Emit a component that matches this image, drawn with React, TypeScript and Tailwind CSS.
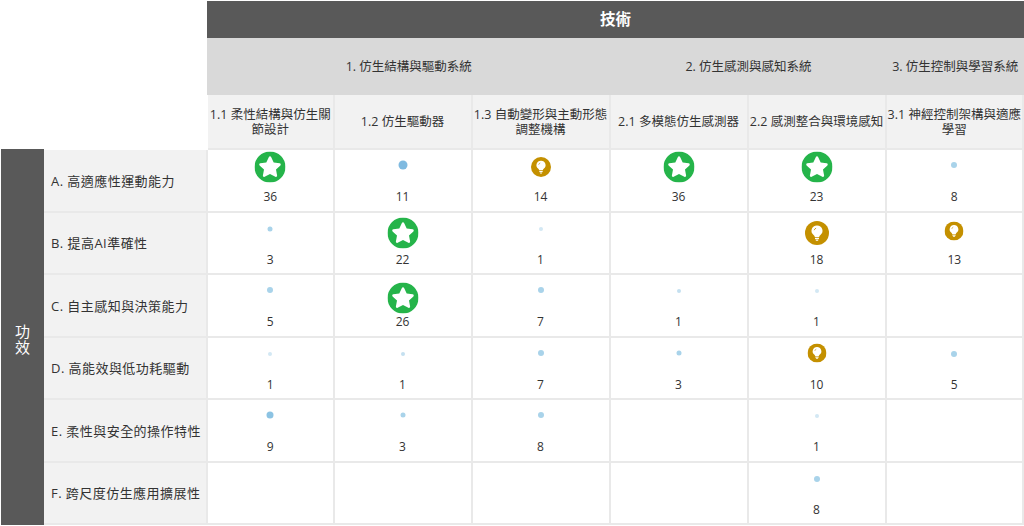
import React from "react";

type Mark = { k: "s" | "b" | "d"; size: number; cy: number; color?: string; n?: number } | null;

const font = { fontFamily: '"Open Sans","Noto Sans CJK TC",sans-serif' };

const colClass = ["col-start-4", "col-start-5", "col-start-6", "col-start-7", "col-start-8", "col-start-9"];
const rowClass = ["row-start-5", "row-start-6", "row-start-7", "row-start-8", "row-start-9", "row-start-10"];

function Star({ size }: { size: number }) {
  return (
    <svg width={size} height={size} viewBox="0 0 31 31" className="block">
      <circle cx="15.5" cy="15.5" r="15.5" fill="#25b44a" />
      <path
        d="M15.5 4.8c.5 0 .9.3 1.1.7l2.6 5.5 6 .8c1 .1 1.4 1.4.7 2.1l-4.4 4.2 1.1 6c.2 1-.9 1.7-1.7 1.2l-5.4-2.9-5.4 2.9c-.8.5-1.9-.2-1.7-1.2l1.1-6-4.4-4.2c-.7-.7-.3-2 .7-2.1l6-.8 2.6-5.5c.2-.4.6-.7 1.1-.7z"
        fill="#fff"
      />
    </svg>
  );
}

function Bulb({ size }: { size: number }) {
  return (
    <svg width={size} height={size} viewBox="0 0 24 24" className="block">
      <circle cx="12" cy="12" r="12" fill="#c49000" />
      <path d="M12 4.4a5.4 5.4 0 0 0-3.2 9.8c.6.5.9 1.1 1 1.8h4.4c.1-.7.4-1.3 1-1.8A5.4 5.4 0 0 0 12 4.4z" fill="#fff" />
      <path d="M10 16.8h4v1.1h-4zM10.4 18.5h3.2l-.6 1.2h-2z" fill="#fff" />
      <path d="M9.2 9.2a3.2 3.2 0 0 1 1.9-2.1" stroke="#c49000" strokeWidth=".8" fill="none" />
    </svg>
  );
}

const cols: React.ReactNode[] = [
  <>1.1 柔性結構與仿生關<br />節設計</>,
  "1.2 仿生驅動器",
  <>1.3 自動變形與主動形態<br />調整機構</>,
  "2.1 多模態仿生感測器",
  "2.2 感測整合與環境感知",
  <>3.1 神經控制架構與適應<br />學習</>,
];

const dot = (size: number, cy: number, n: number, color = "#a9d3ea"): Mark => ({ k: "d", size, cy, n, color });
const star = (cy: number, n: number): Mark => ({ k: "s", size: 31, cy, n });
const bulb = (size: number, cy: number, n: number): Mark => ({ k: "b", size, cy, n });

const rows: { label: string; cells: Mark[] }[] = [
  {
    label: "A. 高適應性運動能力",
    cells: [star(17, 36), dot(9, 15, 11, "#7fbae0"), bulb(20, 17, 14), star(17, 36), star(17, 23), dot(6, 15, 8)],
  },
  {
    label: "B. 提高AI準確性",
    cells: [dot(5, 16, 3), star(20, 22), dot(4, 16, 1, "#d3e8f4"), null, bulb(24, 20, 18), bulb(19, 18, 13)],
  },
  {
    label: "C. 自主感知與決策能力",
    cells: [dot(6, 15, 5), star(23, 26), dot(6, 15, 7), dot(4, 16, 1, "#c4e0f0"), dot(4, 16, 1, "#d3e8f4"), null],
  },
  {
    label: "D. 高能效與低功耗驅動",
    cells: [dot(4, 16, 1, "#d3e8f4"), dot(4, 16, 1, "#c4e0f0"), dot(6, 15, 7), dot(5, 15, 3), bulb(19, 15, 10), dot(6, 16, 5)],
  },
  {
    label: "E. 柔性與安全的操作特性",
    cells: [dot(7, 15, 9, "#8cc3e3"), dot(5, 15, 3), dot(6, 15, 8), null, dot(4, 16, 1, "#d3e8f4"), null],
  },
  {
    label: "F. 跨尺度仿生應用擴展性",
    cells: [null, null, null, null, dot(6, 16, 8), null],
  },
];

function Cell({ mark, className }: { mark: Mark; className: string }) {
  return (
    <div className={"relative flex flex-col items-center border-r-2 border-b-2 border-[#e9e9e9] bg-white " + className}>
      {mark && (
        <>
          <div className="absolute left-1/2 -translate-x-1/2 -translate-y-1/2" style={{ top: mark.cy }}>
            {mark.k === "s" && <Star size={mark.size} />}
            {mark.k === "b" && <Bulb size={mark.size} />}
            {mark.k === "d" && (
              <div className="rounded-full" style={{ width: mark.size, height: mark.size, background: mark.color }} />
            )}
          </div>
          <div className="mt-[39px] text-[12px] leading-[16px] text-[#333]">{mark.n}</div>
        </>
      )}
    </div>
  );
}

export default function App() {
  return (
    <div
      style={font}
      className="grid h-[526px] w-[1024px] grid-cols-[1px_43px_164px_126.5px_138px_138px_138px_138px_137.5px_1px] grid-rows-[1px_37px_57px_55px_62.5px_62.5px_62.5px_62.5px_62.5px_62.5px_2px] bg-white text-[#333]"
    >
      <div className="col-span-6 col-start-4 row-start-2 -ml-px flex items-center justify-center bg-[#595959] text-[15.5px] font-bold text-white">
        技術
      </div>
      <div className="col-span-3 col-start-4 row-start-3 -ml-px flex items-center justify-center bg-[#d9d9d9] pt-px text-[12.5px]">
        1. 仿生結構與驅動系統
      </div>
      <div className="col-span-2 col-start-7 row-start-3 flex items-center justify-center bg-[#d9d9d9] pt-px text-[12.5px]">
        2. 仿生感測與感知系統
      </div>
      <div className="col-start-9 row-start-3 flex items-center justify-center bg-[#d9d9d9] pt-px text-[12.5px]">
        3. 仿生控制與學習系統
      </div>
      {cols.map((c, i) => (
        <div
          key={i}
          className={
            colClass[i] +
            " row-start-4 flex items-center justify-center whitespace-nowrap border-r-2 border-b-2 border-[#e9e9e9] bg-[#f2f2f2] pt-px text-center text-[12.5px] leading-[15.5px]"
          }
        >
          <span>{c}</span>
        </div>
      ))}
      <div className="col-start-2 row-span-6 row-start-5 -mt-px flex items-center justify-center bg-[#595959] pt-[3px] text-center text-[15px] font-normal leading-[16px] text-white">
        <span>功<br />效</span>
      </div>
      {rows.map((r, i) => (
        <React.Fragment key={r.label}>
          <div
            className={
              rowClass[i] +
              " col-start-3 flex items-center whitespace-nowrap border-r-2 border-b-2 border-[#e9e9e9] bg-[#f2f2f2] pl-[7px] pt-[2px] text-[13px] tracking-[0.45px]"
            }
          >
            {r.label}
          </div>
          {r.cells.map((m, j) => (
            <Cell key={j} mark={m} className={rowClass[i] + " " + colClass[j]} />
          ))}
        </React.Fragment>
      ))}
    </div>
  );
}
